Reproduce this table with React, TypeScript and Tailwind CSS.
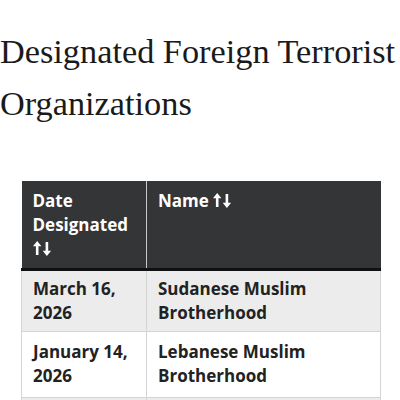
function SortArrows() {
  return (
    <svg width="19" height="15" viewBox="0 0 19 15" className="inline-block align-[-1px]" fill="white">
      <polygon points="4.2,0 0,5.2 2.9,5.2 2.9,14 5.5,14 5.5,5.2 8.4,5.2" />
      <polygon points="13.9,15 9.7,9.8 12.6,9.8 12.6,1 15.2,1 15.2,9.8 18.1,9.8" />
    </svg>
  );
}

export default function App() {
  const rows = [
    { date: ["March 16,", "2026"], name: ["Sudanese Muslim", "Brotherhood"], bg: "bg-[#ececec]", pad: "pt-[6px] pb-[6px]" },
    { date: ["January 14,", "2026"], name: ["Lebanese Muslim", "Brotherhood"], bg: "bg-white", pad: "pt-[8px] pb-[9px]" },
  ];
  return (
    <div className="w-[400px] h-[400px] overflow-hidden bg-white">
      <h1
        className="pt-[25px] text-[34.3px] leading-[52px] text-[#1a1a1a] whitespace-nowrap font-normal"
        style={{ fontFamily: '"Liberation Serif", serif' }}
      >
        Designated Foreign Terrorist
        <br />
        Organizations
      </h1>
      <div className="mt-[52px] ml-[21px] w-[360px]" style={{ fontFamily: '"Open Sans", sans-serif' }}>
        <table className="w-full table-fixed border-collapse text-[17px] leading-[24px] font-bold">
          <colgroup>
            <col className="w-[125px]" />
            <col />
          </colgroup>
          <thead>
            <tr className="bg-[#333537] text-white">
              <th className="text-left align-top pl-[11px] pr-[4px] pt-[8px] pb-[7px] border-r border-[#c8c8c8] border-b-[3px] border-b-[#111]">
                Date
                <br />
                Designated
                <br />
                <SortArrows />
              </th>
              <th className="text-left align-top px-[11px] pt-[8px] pb-[7px] border-b-[3px] border-b-[#111]">
                Name <SortArrows />
              </th>
            </tr>
          </thead>
          <tbody className="text-[#222]">
            {rows.map((r, i) => (
              <tr key={i} className={r.bg}>
                <td className={`align-top pl-[11px] pr-[4px] ${r.pad} border-l border-r border-b border-[#d4d4d4] whitespace-nowrap overflow-hidden`}>
                  {r.date[0]}
                  <br />
                  {r.date[1]}
                </td>
                <td className={`align-top px-[11px] ${r.pad} border-r border-b border-[#d4d4d4]`}>
                  {r.name[0]}
                  <br />
                  {r.name[1]}
                </td>
              </tr>
            ))}
            <tr className="bg-[#ececec]">
              <td className="h-[60px] border-l border-r border-b border-[#d4d4d4]"></td>
              <td className="h-[60px] border-r border-b border-[#d4d4d4]"></td>
            </tr>
          </tbody>
        </table>
      </div>
    </div>
  );
}
